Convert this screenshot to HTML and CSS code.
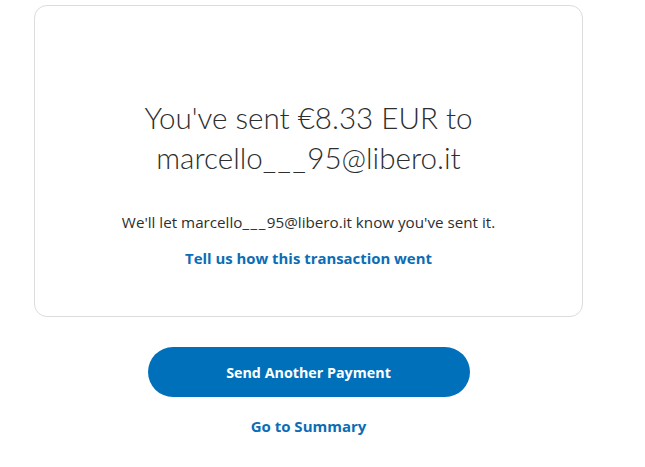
FILE: index.html
```html
<!DOCTYPE html>
<html lang="en">
<head>
<meta charset="utf-8">
<title>Payment sent</title>
<link rel="stylesheet" href="styles.css">
</head>
<body>
<main class="page">
  <section class="card">
    <h1 class="title">You've sent €8.33 EUR to<br>marcello<span class="gap">___</span>95@libero.it</h1>
    <p class="note">We'll let marcello<span class="gap">___</span>95@libero.it know you've sent it.</p>
    <a class="feedback" href="#">Tell us how this transaction went</a>
  </section>
  <div class="actions">
    <button class="primary" type="button">Send Another Payment</button>
    <a class="summary" href="#">Go to Summary</a>
  </div>
</main>
</body>
</html>
```

FILE: styles.css
```css
html, body {
  margin: 0;
  padding: 0;
  background: #ffffff;
}

body {
  font-family: "Open Sans", Lato, "Liberation Sans", sans-serif;
  color: #2c2e2f;
}

.page {
  width: 549px;
  margin-left: 34px;
  padding-top: 5px;
}

.card {
  box-sizing: border-box;
  height: 312px;
  border: 1px solid #dcdcdc;
  border-radius: 13px;
  display: flex;
  flex-direction: column;
  align-items: center;
  padding-top: 92px;
}

.title {
  margin: 0;
  font-family: Lato, "Open Sans", sans-serif;
  font-weight: 300;
  font-size: 29.6px;
  line-height: 40px;
  text-align: center;
  color: #2c2e2f;
}

.gap {
  letter-spacing: 1.5px;
}

.note {
  margin: 34px 0 0;
  font-size: 15.2px;
  line-height: 20px;
  color: #2c2e2f;
}

.feedback {
  margin-top: 16px;
  font-size: 14.9px;
  line-height: 20px;
  font-weight: 700;
  color: #0a6db5;
  text-decoration: none;
}

.actions {
  display: flex;
  flex-direction: column;
  align-items: center;
  padding-top: 30px;
}

.primary {
  width: 322px;
  height: 50px;
  border: 0;
  border-radius: 25px;
  background: #0070ba;
  color: #ffffff;
  font-family: inherit;
  font-size: 14.3px;
  font-weight: 700;
}

.summary {
  margin-top: 19px;
  font-size: 15px;
  line-height: 20px;
  font-weight: 700;
  color: #0a6db5;
  text-decoration: none;
}
```
